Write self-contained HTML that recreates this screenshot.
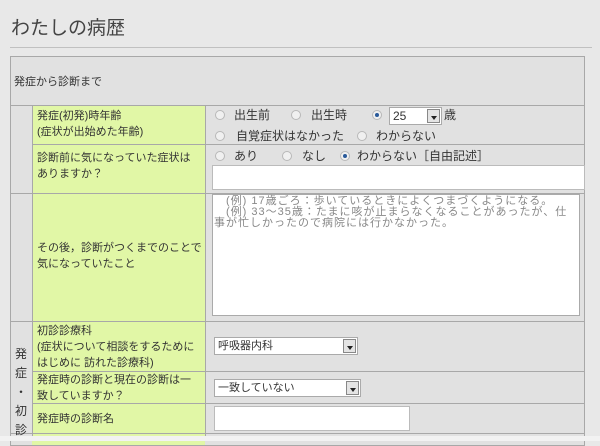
<!DOCTYPE html>
<html><head><meta charset="utf-8"><style>
*{margin:0;padding:0;box-sizing:border-box}
body{width:600px;height:441px;overflow:hidden;background:#e8e8e8;font-family:"Liberation Sans","Noto Sans CJK JP",sans-serif;color:#333;position:relative}
.a{position:absolute}
.t{font-size:11px;line-height:16px;white-space:nowrap}
.g{background:#e1f7a6}
.hl{position:absolute;height:1px;background:#a8a8a8}
.vl{position:absolute;width:1px;background:#a8a8a8}
.r{position:absolute;width:10px;height:10px;border-radius:50%;border:1px solid #b8b8b8;background:#f0f0f0}
.r.on::after{content:"";position:absolute;left:2px;top:2px;width:4px;height:4px;border-radius:50%;background:#2a5a9a}
.box{position:absolute;background:#fff;border:1px solid #bbb}
.sel{position:absolute;background:#fff;border:1px solid #aaa;font-size:11px;line-height:16px;padding-left:3px}
.btn{position:absolute;right:1px;top:1px;bottom:1px;width:13px;background:#e4e4e4;border:1px solid #888}
.btn::after{content:"";position:absolute;left:3px;top:6px;border-left:3px solid transparent;border-right:3px solid transparent;border-top:4px solid #222}
</style></head><body>
<div class="a" style="left:11px;top:13px;font-size:19px;color:#444;white-space:nowrap">わたしの病歴</div>
<div class="hl" style="left:10px;top:47px;width:582px;background:#c0c0c0"></div>
<div class="a" style="left:10px;top:56px;width:575px;height:390px;background:#e1e1e1;border:1px solid #a8a8a8"></div>
<div class="a t" style="left:14px;top:74px;">発症から診断まで</div>
<div class="a g" style="left:32px;top:105px;width:173px;height:340px"></div>
<div class="hl" style="left:10px;top:105px;width:575px"></div>
<div class="hl" style="left:32px;top:144px;width:553px"></div>
<div class="hl" style="left:10px;top:193px;width:575px"></div>
<div class="hl" style="left:10px;top:321px;width:575px"></div>
<div class="hl" style="left:32px;top:371px;width:553px"></div>
<div class="hl" style="left:32px;top:403px;width:553px"></div>
<div class="hl" style="left:10px;top:433px;width:575px"></div>
<div class="vl" style="left:32px;top:105px;height:336px"></div>
<div class="vl" style="left:205px;top:105px;height:336px"></div>

<div class="a t" style="left:37px;top:108px">発症(初発)時年齢<br>(症状が出始めた年齢)</div>
<div class="r" style="left:215px;top:110px"></div><div class="a t" style="left:234px;top:107px;font-size:12px">出生前</div>
<div class="r" style="left:291px;top:110px"></div><div class="a t" style="left:311px;top:107px;font-size:12px">出生時</div>
<div class="r on" style="left:372px;top:110px"></div>
<div class="sel" style="left:389px;top:107px;width:53px;height:18px;font-size:12px">25<div class="btn"></div></div>
<div class="a t" style="left:444px;top:107px;font-size:12px">歳</div>
<div class="r" style="left:215px;top:131px"></div><div class="a t" style="left:236px;top:128px;font-size:12px">自覚症状はなかった</div>
<div class="r" style="left:357px;top:131px"></div><div class="a t" style="left:376px;top:128px;font-size:12px">わからない</div>

<div class="a t" style="left:37px;top:150px">診断前に気になっていた症状は<br>ありますか？</div>
<div class="r" style="left:215px;top:151px"></div><div class="a t" style="left:234px;top:148px;font-size:12px">あり</div>
<div class="r" style="left:282px;top:151px"></div><div class="a t" style="left:302px;top:148px;font-size:12px">なし</div>
<div class="r on" style="left:340px;top:151px"></div><div class="a t" style="left:357px;top:148px;font-size:12px">わからない［自由記述］</div>
<div class="box" style="left:212px;top:165px;width:373px;height:25px"></div>

<div class="a t" style="left:37px;top:240px">その後，診断がつくまでのことで<br>気になっていたこと</div>
<div class="box" style="left:212px;top:194px;width:368px;height:122px;border-color:#aaa"></div>
<div class="a" style="left:214px;top:196px;font-size:11px;line-height:11px;letter-spacing:1px;color:#888;white-space:nowrap">　(例) 17歳ごろ：歩いているときによくつまづくようになる。<br>　(例) 33～35歳：たまに咳が止まらなくなることがあったが、仕<br>事が忙しかったので病院には行かなかった。</div>

<div class="a t" style="left:14px;top:345px;line-height:19px;width:14px;text-align:center;font-size:12px">発<br>症<br>・<br>初<br>診</div>
<div class="a t" style="left:37px;top:323px">初診診療科<br>(症状について相談をするために<br>はじめに 訪れた診療科)</div>
<div class="sel" style="left:214px;top:337px;width:144px;height:18px">呼吸器内科<div class="btn"></div></div>
<div class="a t" style="left:37px;top:372px">発症時の診断と現在の診断は一<br>致していますか？</div>
<div class="sel" style="left:214px;top:379px;width:147px;height:18px">一致していない<div class="btn"></div></div>
<div class="a t" style="left:37px;top:411px">発症時の診断名</div>
<div class="box" style="left:214px;top:406px;width:196px;height:25px"></div>
<div class="a" style="left:0;top:436px;width:600px;height:5px;background:#f2f2f2"></div>
</body></html>
